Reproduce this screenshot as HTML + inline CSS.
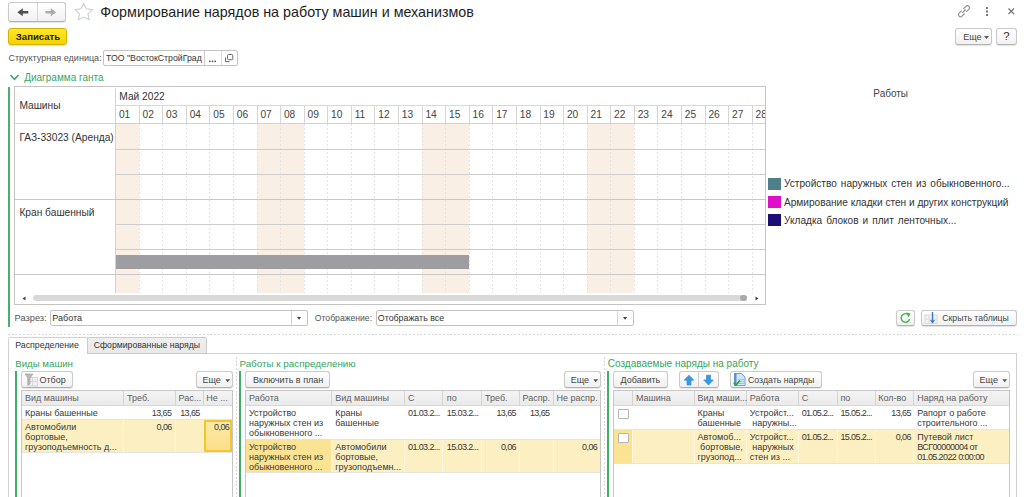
<!DOCTYPE html>
<html><head><meta charset="utf-8"><style>
html,body{margin:0;padding:0;background:#fff;}
body{width:1024px;height:497px;position:relative;overflow:hidden;font-family:"Liberation Sans",sans-serif;}
body>div,body>svg{position:absolute;}
.t{white-space:pre;line-height:1;}
</style></head><body>
<div style="left:8px;top:2px;width:58px;height:20px;box-sizing:border-box;border:1px solid #c9c9c9;border-bottom-color:#b3b3b3;border-radius:3px;background:linear-gradient(#fff,#f1f1f1);box-shadow:0 1px 1px rgba(0,0,0,.12);"></div>
<div style="left:37px;top:3px;width:1px;height:18px;background:#d6d6d6;"></div>
<svg style="position:absolute;left:0;top:0" width="100" height="30">
<path d="M17.3 12.2 L22.8 8.2 V16.2 Z M22 11 H28.3 V13.5 H22 Z" fill="#505050"/>
<path d="M56.2 12.2 L50.7 8.2 V16.2 Z M51.5 11 H45.4 V13.5 H51.5 Z" fill="#ababab"/>
<path d="M83.75 3.50 L86.40 8.86 L92.31 9.72 L88.03 13.89 L89.04 19.78 L83.75 17.00 L78.46 19.78 L79.47 13.89 L75.19 9.72 L81.10 8.86 Z" stroke="#c9d0d6" stroke-width="1.1" fill="none" stroke-linejoin="miter"/>
</svg>
<div class="t" style="left:100.30px;top:4.50px;font-size:14.3px;color:#1e1e1e;font-weight:normal;">Формирование нарядов на работу машин и механизмов</div>
<svg style="position:absolute;left:950px;top:0" width="74" height="24">
<g stroke="#8c8c8c" stroke-width="1.3" fill="none" transform="translate(14 11.2) rotate(-45) scale(0.86) translate(-14 -11)">
<path d="M12.6 8.6 H8.3 A2.4 2.4 0 0 0 8.3 13.4 H12.6"/>
<path d="M15.4 8.6 H19.7 A2.4 2.4 0 0 1 19.7 13.4 H15.4"/>
<path d="M11.2 11 H16.8"/>
</g>
<rect x="36" y="7" width="2" height="2" fill="#777"/><rect x="36" y="10.5" width="2" height="2" fill="#777"/><rect x="36" y="14" width="2" height="2" fill="#777"/>
<path d="M58.5 8.5 L64 14 M64 8.5 L58.5 14" stroke="#777" stroke-width="1.3"/>
</svg>
<div style="left:955px;top:28px;width:37px;height:17px;box-sizing:border-box;border:1px solid #c9c9c9;border-bottom-color:#b3b3b3;border-radius:3px;background:linear-gradient(#fff,#f1f1f1);box-shadow:0 1px 1px rgba(0,0,0,.12);"></div>
<div class="t" style="left:963.30px;top:32.88px;font-size:9px;color:#444;font-weight:normal;">Еще</div>
<svg style="position:absolute;left:984px;top:36px" width="6" height="4"><path d="M0 0H5L2.5 3Z" fill="#555"/></svg>
<div style="left:996px;top:28px;width:21px;height:17px;box-sizing:border-box;border:1px solid #c9c9c9;border-bottom-color:#b3b3b3;border-radius:3px;background:linear-gradient(#fff,#f1f1f1);box-shadow:0 1px 1px rgba(0,0,0,.12);"></div>
<div class="t" style="left:1003.20px;top:31.23px;font-size:11.3px;color:#2a2a2a;font-weight:normal;">?</div>
<div style="left:8px;top:28px;width:59px;height:16.5px;box-sizing:border-box;border:1px solid #d5b400;border-radius:3px;background:linear-gradient(#ffe52e,#f6d200);box-shadow:0 1px 1px rgba(0,0,0,.15);"></div>
<div class="t" style="left:15.80px;top:31.67px;font-size:9.6px;color:#1a1a1a;font-weight:bold;">Записать</div>
<div class="t" style="left:8.40px;top:54.34px;font-size:9.05px;color:#555;font-weight:normal;">Структурная единица:</div>
<div style="left:103px;top:50px;width:135px;height:16px;box-sizing:border-box;border:1px solid #c3c3c3;border-radius:2px;background:#fff;"></div>
<div style="left:204px;top:51px;width:1px;height:14px;background:#cfcfcf;"></div>
<div style="left:220.5px;top:51px;width:1px;height:14px;background:#dadada;"></div>
<div class="t" style="left:106px;top:53px;width:96px;overflow:hidden;font-size:8.75px;color:#333;line-height:10px">ТОО "ВостокСтройГрад"</div>
<svg style="position:absolute;left:205px;top:56px" width="15" height="8">
<rect x="4" y="4.6" width="1.6" height="1.5" fill="#555"/><rect x="6.7" y="4.6" width="1.6" height="1.5" fill="#555"/><rect x="9.4" y="4.6" width="1.6" height="1.5" fill="#555"/>
</svg>
<svg style="position:absolute;left:224px;top:53px" width="10" height="10">
<rect x="3.6" y="1.5" width="5.2" height="5.2" rx="1" fill="none" stroke="#666" stroke-width="1"/>
<path d="M1.5 4.5 V8.6 H5.5" fill="none" stroke="#666" stroke-width="1"/>
</svg>
<svg style="position:absolute;left:9px;top:73px" width="12" height="9"><path d="M1.5 2 L5.5 6.3 L9.5 2" stroke="#3aa56a" stroke-width="1.5" fill="none"/></svg>
<div class="t" style="left:24.20px;top:72.53px;font-size:10px;color:#35a764;font-weight:normal;">Диаграмма ганта</div>
<div style="left:8px;top:86.5px;width:1.5px;height:240.0px;background:#45b06f;"></div>
<div style="left:14px;top:86px;width:752px;height:219px;box-sizing:border-box;border:1px solid #c4c4c4;background:#fff;"></div>
<div style="left:115.6px;top:124.1px;width:23.58px;height:168.50000000000003px;background:#faefe4;"></div>
<div style="left:257.08px;top:124.1px;width:23.58px;height:168.50000000000003px;background:#faefe4;"></div>
<div style="left:280.65999999999997px;top:124.1px;width:23.58px;height:168.50000000000003px;background:#faefe4;"></div>
<div style="left:422.14px;top:124.1px;width:23.58px;height:168.50000000000003px;background:#faefe4;"></div>
<div style="left:445.72px;top:124.1px;width:23.58px;height:168.50000000000003px;background:#faefe4;"></div>
<div style="left:587.1999999999999px;top:124.1px;width:23.58px;height:168.50000000000003px;background:#faefe4;"></div>
<div style="left:610.78px;top:124.1px;width:23.58px;height:168.50000000000003px;background:#faefe4;"></div>
<div style="left:139px;top:124px;width:1px;height:168.6px;background:repeating-linear-gradient(#e3e3e3 0 2.5px,transparent 2.5px 4px)"></div>
<div style="left:162px;top:124px;width:1px;height:168.6px;background:repeating-linear-gradient(#e3e3e3 0 2.5px,transparent 2.5px 4px)"></div>
<div style="left:186px;top:124px;width:1px;height:168.6px;background:repeating-linear-gradient(#e3e3e3 0 2.5px,transparent 2.5px 4px)"></div>
<div style="left:209px;top:124px;width:1px;height:168.6px;background:repeating-linear-gradient(#e3e3e3 0 2.5px,transparent 2.5px 4px)"></div>
<div style="left:233px;top:124px;width:1px;height:168.6px;background:repeating-linear-gradient(#e3e3e3 0 2.5px,transparent 2.5px 4px)"></div>
<div style="left:257px;top:124px;width:1px;height:168.6px;background:repeating-linear-gradient(#e3e3e3 0 2.5px,transparent 2.5px 4px)"></div>
<div style="left:280px;top:124px;width:1px;height:168.6px;background:repeating-linear-gradient(#e3e3e3 0 2.5px,transparent 2.5px 4px)"></div>
<div style="left:304px;top:124px;width:1px;height:168.6px;background:repeating-linear-gradient(#e3e3e3 0 2.5px,transparent 2.5px 4px)"></div>
<div style="left:327px;top:124px;width:1px;height:168.6px;background:repeating-linear-gradient(#e3e3e3 0 2.5px,transparent 2.5px 4px)"></div>
<div style="left:351px;top:124px;width:1px;height:168.6px;background:repeating-linear-gradient(#e3e3e3 0 2.5px,transparent 2.5px 4px)"></div>
<div style="left:374px;top:124px;width:1px;height:168.6px;background:repeating-linear-gradient(#e3e3e3 0 2.5px,transparent 2.5px 4px)"></div>
<div style="left:398px;top:124px;width:1px;height:168.6px;background:repeating-linear-gradient(#e3e3e3 0 2.5px,transparent 2.5px 4px)"></div>
<div style="left:422px;top:124px;width:1px;height:168.6px;background:repeating-linear-gradient(#e3e3e3 0 2.5px,transparent 2.5px 4px)"></div>
<div style="left:445px;top:124px;width:1px;height:168.6px;background:repeating-linear-gradient(#e3e3e3 0 2.5px,transparent 2.5px 4px)"></div>
<div style="left:469px;top:124px;width:1px;height:168.6px;background:repeating-linear-gradient(#e3e3e3 0 2.5px,transparent 2.5px 4px)"></div>
<div style="left:492px;top:124px;width:1px;height:168.6px;background:repeating-linear-gradient(#e3e3e3 0 2.5px,transparent 2.5px 4px)"></div>
<div style="left:516px;top:124px;width:1px;height:168.6px;background:repeating-linear-gradient(#e3e3e3 0 2.5px,transparent 2.5px 4px)"></div>
<div style="left:540px;top:124px;width:1px;height:168.6px;background:repeating-linear-gradient(#e3e3e3 0 2.5px,transparent 2.5px 4px)"></div>
<div style="left:563px;top:124px;width:1px;height:168.6px;background:repeating-linear-gradient(#e3e3e3 0 2.5px,transparent 2.5px 4px)"></div>
<div style="left:587px;top:124px;width:1px;height:168.6px;background:repeating-linear-gradient(#e3e3e3 0 2.5px,transparent 2.5px 4px)"></div>
<div style="left:610px;top:124px;width:1px;height:168.6px;background:repeating-linear-gradient(#e3e3e3 0 2.5px,transparent 2.5px 4px)"></div>
<div style="left:634px;top:124px;width:1px;height:168.6px;background:repeating-linear-gradient(#e3e3e3 0 2.5px,transparent 2.5px 4px)"></div>
<div style="left:657px;top:124px;width:1px;height:168.6px;background:repeating-linear-gradient(#e3e3e3 0 2.5px,transparent 2.5px 4px)"></div>
<div style="left:681px;top:124px;width:1px;height:168.6px;background:repeating-linear-gradient(#e3e3e3 0 2.5px,transparent 2.5px 4px)"></div>
<div style="left:705px;top:124px;width:1px;height:168.6px;background:repeating-linear-gradient(#e3e3e3 0 2.5px,transparent 2.5px 4px)"></div>
<div style="left:728px;top:124px;width:1px;height:168.6px;background:repeating-linear-gradient(#e3e3e3 0 2.5px,transparent 2.5px 4px)"></div>
<div style="left:752px;top:124px;width:1px;height:168.6px;background:repeating-linear-gradient(#e3e3e3 0 2.5px,transparent 2.5px 4px)"></div>
<div style="left:139px;top:105px;width:1px;height:18px;background:#d6d6d6;"></div>
<div style="left:162px;top:105px;width:1px;height:18px;background:#d6d6d6;"></div>
<div style="left:186px;top:105px;width:1px;height:18px;background:#d6d6d6;"></div>
<div style="left:209px;top:105px;width:1px;height:18px;background:#d6d6d6;"></div>
<div style="left:233px;top:105px;width:1px;height:18px;background:#d6d6d6;"></div>
<div style="left:257px;top:105px;width:1px;height:18px;background:#d6d6d6;"></div>
<div style="left:280px;top:105px;width:1px;height:18px;background:#d6d6d6;"></div>
<div style="left:304px;top:105px;width:1px;height:18px;background:#d6d6d6;"></div>
<div style="left:327px;top:105px;width:1px;height:18px;background:#d6d6d6;"></div>
<div style="left:351px;top:105px;width:1px;height:18px;background:#d6d6d6;"></div>
<div style="left:374px;top:105px;width:1px;height:18px;background:#d6d6d6;"></div>
<div style="left:398px;top:105px;width:1px;height:18px;background:#d6d6d6;"></div>
<div style="left:422px;top:105px;width:1px;height:18px;background:#d6d6d6;"></div>
<div style="left:445px;top:105px;width:1px;height:18px;background:#d6d6d6;"></div>
<div style="left:469px;top:105px;width:1px;height:18px;background:#d6d6d6;"></div>
<div style="left:492px;top:105px;width:1px;height:18px;background:#d6d6d6;"></div>
<div style="left:516px;top:105px;width:1px;height:18px;background:#d6d6d6;"></div>
<div style="left:540px;top:105px;width:1px;height:18px;background:#d6d6d6;"></div>
<div style="left:563px;top:105px;width:1px;height:18px;background:#d6d6d6;"></div>
<div style="left:587px;top:105px;width:1px;height:18px;background:#d6d6d6;"></div>
<div style="left:610px;top:105px;width:1px;height:18px;background:#d6d6d6;"></div>
<div style="left:634px;top:105px;width:1px;height:18px;background:#d6d6d6;"></div>
<div style="left:657px;top:105px;width:1px;height:18px;background:#d6d6d6;"></div>
<div style="left:681px;top:105px;width:1px;height:18px;background:#d6d6d6;"></div>
<div style="left:705px;top:105px;width:1px;height:18px;background:#d6d6d6;"></div>
<div style="left:728px;top:105px;width:1px;height:18px;background:#d6d6d6;"></div>
<div style="left:752px;top:105px;width:1px;height:18px;background:#d6d6d6;"></div>
<div style="left:115px;top:87.5px;width:1px;height:205.10000000000002px;background:#d2d2d2;"></div>
<div style="left:116px;top:105px;width:649px;height:1px;background:#d8d8d8;"></div>
<div style="left:15px;top:123px;width:750px;height:1px;background:#d2d2d2;"></div>
<div style="left:115.6px;top:149px;width:649.4px;height:1px;background:#cdcdcd;"></div>
<div style="left:115.6px;top:174px;width:649.4px;height:1px;background:#cdcdcd;"></div>
<div style="left:115.6px;top:224px;width:649.4px;height:1px;background:#cdcdcd;"></div>
<div style="left:115.6px;top:249px;width:649.4px;height:1px;background:#cdcdcd;"></div>
<div style="left:15px;top:199px;width:750px;height:1px;background:#c8c8c8;"></div>
<div style="left:15px;top:274px;width:750px;height:1px;background:#c8c8c8;"></div>
<div style="left:115.9px;top:255.1px;width:353.5px;height:13.8px;background:#9e9da2;"></div>
<div class="t" style="left:19.40px;top:100.57px;font-size:10.2px;color:#333;font-weight:normal;">Машины</div>
<div class="t" style="left:119.30px;top:91.77px;font-size:10.2px;color:#333;font-weight:normal;">Май 2022</div>
<div class="t" style="left:118.90px;top:109.57px;font-size:10.2px;color:#444;font-weight:normal;">01</div>
<div class="t" style="left:142.48px;top:109.57px;font-size:10.2px;color:#444;font-weight:normal;">02</div>
<div class="t" style="left:166.06px;top:109.57px;font-size:10.2px;color:#444;font-weight:normal;">03</div>
<div class="t" style="left:189.64px;top:109.57px;font-size:10.2px;color:#444;font-weight:normal;">04</div>
<div class="t" style="left:213.22px;top:109.57px;font-size:10.2px;color:#444;font-weight:normal;">05</div>
<div class="t" style="left:236.80px;top:109.57px;font-size:10.2px;color:#444;font-weight:normal;">06</div>
<div class="t" style="left:260.38px;top:109.57px;font-size:10.2px;color:#444;font-weight:normal;">07</div>
<div class="t" style="left:283.96px;top:109.57px;font-size:10.2px;color:#444;font-weight:normal;">08</div>
<div class="t" style="left:307.54px;top:109.57px;font-size:10.2px;color:#444;font-weight:normal;">09</div>
<div class="t" style="left:331.12px;top:109.57px;font-size:10.2px;color:#444;font-weight:normal;">10</div>
<div class="t" style="left:354.70px;top:109.57px;font-size:10.2px;color:#444;font-weight:normal;">11</div>
<div class="t" style="left:378.28px;top:109.57px;font-size:10.2px;color:#444;font-weight:normal;">12</div>
<div class="t" style="left:401.86px;top:109.57px;font-size:10.2px;color:#444;font-weight:normal;">13</div>
<div class="t" style="left:425.44px;top:109.57px;font-size:10.2px;color:#444;font-weight:normal;">14</div>
<div class="t" style="left:449.02px;top:109.57px;font-size:10.2px;color:#444;font-weight:normal;">15</div>
<div class="t" style="left:472.60px;top:109.57px;font-size:10.2px;color:#444;font-weight:normal;">16</div>
<div class="t" style="left:496.18px;top:109.57px;font-size:10.2px;color:#444;font-weight:normal;">17</div>
<div class="t" style="left:519.76px;top:109.57px;font-size:10.2px;color:#444;font-weight:normal;">18</div>
<div class="t" style="left:543.34px;top:109.57px;font-size:10.2px;color:#444;font-weight:normal;">19</div>
<div class="t" style="left:566.92px;top:109.57px;font-size:10.2px;color:#444;font-weight:normal;">20</div>
<div class="t" style="left:590.50px;top:109.57px;font-size:10.2px;color:#444;font-weight:normal;">21</div>
<div class="t" style="left:614.08px;top:109.57px;font-size:10.2px;color:#444;font-weight:normal;">22</div>
<div class="t" style="left:637.66px;top:109.57px;font-size:10.2px;color:#444;font-weight:normal;">23</div>
<div class="t" style="left:661.24px;top:109.57px;font-size:10.2px;color:#444;font-weight:normal;">24</div>
<div class="t" style="left:684.82px;top:109.57px;font-size:10.2px;color:#444;font-weight:normal;">25</div>
<div class="t" style="left:708.40px;top:109.57px;font-size:10.2px;color:#444;font-weight:normal;">26</div>
<div class="t" style="left:731.98px;top:109.57px;font-size:10.2px;color:#444;font-weight:normal;">27</div>
<div class="t" style="left:755.56px;top:109.57px;font-size:10.2px;color:#444;font-weight:normal;">28</div>
<div style="left:765.5px;top:100px;width:6px;height:30px;background:#fff"></div>
<div style="left:765px;top:86px;width:1px;height:219px;background:#c4c4c4;"></div>
<div class="t" style="left:19.40px;top:132.57px;font-size:10.2px;color:#333;font-weight:normal;">ГАЗ-33023 (Аренда)</div>
<div class="t" style="left:19.40px;top:207.57px;font-size:10.2px;color:#333;font-weight:normal;">Кран башенный</div>
<div style="left:32.5px;top:295.2px;width:714.4px;height:6.3px;background:#d9d9d9;border-radius:3.2px;"></div>
<div style="left:740.2px;top:295.2px;width:6.7px;height:6.3px;background:#a9a9a9;border-radius:50%;"></div>
<svg style="position:absolute;left:22px;top:296px" width="5" height="6"><path d="M0.5 2.5L3.5 0.5V4.5Z" fill="#444"/></svg>
<svg style="position:absolute;left:755px;top:296px" width="5" height="6"><path d="M3.5 2.5L0.5 0.5V4.5Z" fill="#444"/></svg>
<div class="t" style="left:873.30px;top:88.94px;font-size:10px;color:#444;font-weight:normal;">Работы</div>
<div style="left:767.5px;top:177.5px;width:13px;height:12.3px;background:#4f7f8a;"></div>
<div style="left:767.5px;top:196px;width:13px;height:12px;background:#dd10c8;"></div>
<div style="left:767.5px;top:214px;width:13px;height:12px;background:#1b0f76;"></div>
<div class="t" style="left:784.00px;top:179.45px;font-size:10.1px;color:#333;font-weight:normal;word-spacing:1.2px">Устройство наружных стен из обыкновенного...</div>
<div class="t" style="left:784.00px;top:197.75px;font-size:10.1px;color:#333;font-weight:normal;">Армирование кладки стен и других конструкций</div>
<div class="t" style="left:784.00px;top:215.85px;font-size:10.1px;color:#333;font-weight:normal;word-spacing:1.2px">Укладка блоков и плит ленточных...</div>
<div class="t" style="left:14.50px;top:313.73px;font-size:9.3px;color:#555;font-weight:normal;">Разрез:</div>
<div style="left:50px;top:310px;width:258px;height:16px;box-sizing:border-box;border:1px solid #c3c3c3;border-radius:2px;background:#fff;"></div>
<div style="left:291px;top:311px;width:1px;height:14px;background:#d0d0d0;"></div>
<div class="t" style="left:52.30px;top:313.74px;font-size:9.05px;color:#333;font-weight:normal;">Работа</div>
<svg style="position:absolute;left:297px;top:317px" width="6" height="4"><path d="M0 0H4.2L2.1 2.8Z" fill="#444"/></svg>
<div class="t" style="left:314.80px;top:314.08px;font-size:8.65px;color:#555;font-weight:normal;">Отображение:</div>
<div style="left:376px;top:310px;width:258px;height:16px;box-sizing:border-box;border:1px solid #c3c3c3;border-radius:2px;background:#fff;"></div>
<div style="left:617px;top:311px;width:1px;height:14px;background:#d8d8d8;"></div>
<div class="t" style="left:377.80px;top:314.11px;font-size:8.85px;color:#333;font-weight:normal;">Отображать все</div>
<svg style="position:absolute;left:622.8px;top:317px" width="6" height="4"><path d="M0 0H4.2L2.1 2.8Z" fill="#444"/></svg>
<div style="left:896px;top:310px;width:19px;height:16px;box-sizing:border-box;border:1px solid #c9c9c9;border-bottom-color:#b3b3b3;border-radius:3px;background:linear-gradient(#fff,#f1f1f1);box-shadow:0 1px 1px rgba(0,0,0,.12);"></div>
<svg style="position:absolute;left:899px;top:311px" width="14" height="14">
<path d="M10.6 8.2 A4.3 4.3 0 1 1 8.6 3.2" stroke="#46b24c" stroke-width="1.4" fill="none"/>
<path d="M7.2 1.6 L11.4 2.4 L9.6 6.4 Z" fill="#46b24c"/>
</svg>
<div style="left:921px;top:310px;width:96px;height:16px;box-sizing:border-box;border:1px solid #c9c9c9;border-bottom-color:#b3b3b3;border-radius:3px;background:linear-gradient(#fff,#f1f1f1);box-shadow:0 1px 1px rgba(0,0,0,.12);"></div>
<svg style="position:absolute;left:924px;top:311px" width="15" height="14">
<rect x="1" y="4" width="12" height="8.5" fill="#f2f2f2" stroke="#dcdcdc" stroke-width="1"/>
<path d="M1 8.2H13M5 4V12.5M9 4V12.5" stroke="#dcdcdc" stroke-width="1"/>
<path d="M8.5 1V10" stroke="#3f79c0" stroke-width="1.4"/><path d="M5.8 9.2L8.5 12.4L11.2 9.2Z" fill="#3f79c0"/>
</svg>
<div class="t" style="left:942.30px;top:314.24px;font-size:8.7px;color:#444;font-weight:normal;">Скрыть таблицы</div>
<div style="left:8px;top:334px;width:1010px;height:1px;background:repeating-linear-gradient(90deg,#d9d9d9 0 2px,transparent 2px 3.75px)"></div>
<div style="left:8px;top:353px;width:1009px;height:150px;box-sizing:border-box;border:1px solid #d2d2d2;background:#fff"></div>
<div style="left:8px;top:337px;width:80px;height:17px;box-sizing:border-box;border:1px solid #d2d2d2;border-bottom:none;background:#fff;border-radius:2px 2px 0 0"></div>
<div style="left:87px;top:337px;width:120px;height:17px;box-sizing:border-box;border:1px solid #cbcbcb;background:linear-gradient(#f0f0f0,#e8e8e8);border-radius:2px 2px 0 0"></div>
<div class="t" style="left:15.20px;top:341.05px;font-size:8.8px;color:#333;font-weight:normal;">Распределение</div>
<div class="t" style="left:93.70px;top:341.14px;font-size:8.7px;color:#333;font-weight:normal;">Сформированные наряды</div>
<div class="t" style="left:15.20px;top:359.39px;font-size:9.7px;color:#33a561;font-weight:normal;">Виды машин</div>
<div class="t" style="left:239.40px;top:359.26px;font-size:9.85px;color:#33a561;font-weight:normal;">Работы к распределению</div>
<div class="t" style="left:607.80px;top:359.14px;font-size:10px;color:#33a561;font-weight:normal;">Создаваемые наряды на работу</div>
<div style="left:15px;top:371px;width:1.5px;height:126px;background:#3fae69;"></div>
<div style="left:239px;top:371px;width:1.5px;height:126px;background:#3fae69;"></div>
<div style="left:607px;top:371px;width:1.5px;height:126px;background:#3fae69;"></div>
<div style="left:235.5px;top:357px;width:1px;height:140px;background:repeating-linear-gradient(#d8d8d8 0 2px,transparent 2px 3.75px)"></div>
<div style="left:604px;top:357px;width:1px;height:140px;background:repeating-linear-gradient(#d8d8d8 0 2px,transparent 2px 3.75px)"></div>
<div style="left:21px;top:390px;width:212px;height:110px;box-sizing:border-box;border:1px solid #c6c6c6;background:#fff"></div>
<div style="left:22px;top:391px;width:210px;height:14px;background:linear-gradient(#f4f4f4,#eaeaea);"></div>
<div style="left:22px;top:405px;width:210px;height:1px;background:#d8d8d8;"></div>
<div style="left:123px;top:391px;width:1px;height:14px;background:#d4d4d4;"></div>
<div style="left:175px;top:391px;width:1px;height:14px;background:#d4d4d4;"></div>
<div style="left:203px;top:391px;width:1px;height:14px;background:#d4d4d4;"></div>
<div style="left:22px;top:420px;width:210px;height:32px;background:#fcf0c3;"></div>
<div style="left:123px;top:420px;width:1px;height:32px;background:#fdf7e2;"></div>
<div style="left:175px;top:420px;width:1px;height:32px;background:#fdf7e2;"></div>
<div style="left:203px;top:420px;width:1px;height:32px;background:#fdf7e2;"></div>
<div style="left:22px;top:419px;width:210px;height:1px;background:#e4e4e4;"></div>
<div style="left:22px;top:452px;width:210px;height:1px;background:#e4e4e4;"></div>
<div style="left:204px;top:420px;width:28px;height:32px;box-sizing:border-box;border:2px solid #f3c62b;background:linear-gradient(#fce9a8,#fbdf88);"></div>
<div class="t" style="left:25.00px;top:393.98px;font-size:9px;color:#5e5e5e;font-weight:normal;">Вид машины</div>
<div class="t" style="left:127.00px;top:393.98px;font-size:9px;color:#5e5e5e;font-weight:normal;">Треб.</div>
<div class="t" style="left:178.50px;top:393.98px;font-size:9px;color:#5e5e5e;font-weight:normal;">Рас...</div>
<div class="t" style="left:206.20px;top:393.98px;font-size:9px;color:#5e5e5e;font-weight:normal;">Не ...</div>
<div class="t" style="left:25.00px;top:408.78px;font-size:9px;color:#383838;font-weight:normal;">Краны башенные</div>
<div class="t" style="right:852.70px;top:408.78px;font-size:9px;color:#383838;letter-spacing:-0.6px;">13,65</div>
<div class="t" style="right:824.30px;top:408.78px;font-size:9px;color:#383838;letter-spacing:-0.6px;">13,65</div>
<div class="t" style="left:25.00px;top:423.08px;font-size:9px;color:#383838;font-weight:normal;">Автомобили</div>
<div class="t" style="left:25.00px;top:433.08px;font-size:9px;color:#383838;font-weight:normal;">бортовые,</div>
<div class="t" style="left:25.00px;top:443.08px;font-size:9px;color:#383838;font-weight:normal;">грузоподъемность д...</div>
<div class="t" style="right:852.30px;top:423.08px;font-size:9px;color:#383838;letter-spacing:-0.6px;">0,06</div>
<div class="t" style="right:794.80px;top:423.08px;font-size:9px;color:#383838;letter-spacing:-0.6px;">0,06</div>
<div style="left:21px;top:371px;width:52px;height:17px;box-sizing:border-box;border:1px solid #cacaca;border-bottom-color:#b0b0b0;border-radius:3px;background:linear-gradient(#fff,#f0f0f0);box-shadow:0 1px 1px rgba(0,0,0,.10)"></div>
<svg style="position:absolute;left:24px;top:373px" width="14" height="14">
<rect x="3.5" y="4.5" width="10" height="8.5" fill="#f0f0f0" stroke="#d8d8d8"/>
<path d="M3.5 8.5H13.5M8.5 4.5V13" stroke="#d8d8d8"/>
<path d="M1 1H9L6 5V11L4 12V5Z" fill="#b9b9b9" stroke="#9a9a9a" stroke-width="0.6"/>
</svg>
<div class="t" style="left:39.50px;top:375.68px;font-size:9px;color:#444;font-weight:normal;">Отбор</div>
<div style="left:196px;top:371px;width:37px;height:17px;box-sizing:border-box;border:1px solid #cacaca;border-bottom-color:#b0b0b0;border-radius:3px;background:linear-gradient(#fff,#f0f0f0);box-shadow:0 1px 1px rgba(0,0,0,.10)"></div>
<div class="t" style="left:202.50px;top:375.68px;font-size:9px;color:#444;font-weight:normal;">Еще</div>
<svg style="position:absolute;left:225px;top:379px" width="6" height="4"><path d="M0.3 0.2H5.2L2.75 3.2Z" fill="#555"/></svg>
<div style="left:245px;top:390px;width:356px;height:110px;box-sizing:border-box;border:1px solid #c6c6c6;background:#fff"></div>
<div style="left:246px;top:391px;width:354px;height:14px;background:linear-gradient(#f4f4f4,#eaeaea);"></div>
<div style="left:246px;top:405px;width:354px;height:1px;background:#d8d8d8;"></div>
<div style="left:331px;top:391px;width:1px;height:14px;background:#d4d4d4;"></div>
<div style="left:404px;top:391px;width:1px;height:14px;background:#d4d4d4;"></div>
<div style="left:442px;top:391px;width:1px;height:14px;background:#d4d4d4;"></div>
<div style="left:481px;top:391px;width:1px;height:14px;background:#d4d4d4;"></div>
<div style="left:519px;top:391px;width:1px;height:14px;background:#d4d4d4;"></div>
<div style="left:553px;top:391px;width:1px;height:14px;background:#d4d4d4;"></div>
<div style="left:246px;top:439px;width:354px;height:33px;background:#fcf0c3;"></div>
<div style="left:331px;top:439px;width:1px;height:33px;background:#fdf7e2;"></div>
<div style="left:404px;top:439px;width:1px;height:33px;background:#fdf7e2;"></div>
<div style="left:442px;top:439px;width:1px;height:33px;background:#fdf7e2;"></div>
<div style="left:481px;top:439px;width:1px;height:33px;background:#fdf7e2;"></div>
<div style="left:519px;top:439px;width:1px;height:33px;background:#fdf7e2;"></div>
<div style="left:553px;top:439px;width:1px;height:33px;background:#fdf7e2;"></div>
<div style="left:246px;top:439px;width:354px;height:1px;background:#e4e4e4;"></div>
<div style="left:246px;top:472px;width:354px;height:1px;background:#e4e4e4;"></div>
<div style="left:246px;top:439px;width:85px;height:33px;background:#fbe394;"></div>
<div class="t" style="left:249.00px;top:394.08px;font-size:9px;color:#5e5e5e;font-weight:normal;">Работа</div>
<div class="t" style="left:335.30px;top:394.08px;font-size:9px;color:#5e5e5e;font-weight:normal;">Вид машины</div>
<div class="t" style="left:408.00px;top:394.08px;font-size:9px;color:#5e5e5e;font-weight:normal;">С</div>
<div class="t" style="left:446.80px;top:394.08px;font-size:9px;color:#5e5e5e;font-weight:normal;">по</div>
<div class="t" style="left:485.00px;top:394.08px;font-size:9px;color:#5e5e5e;font-weight:normal;">Треб.</div>
<div class="t" style="left:522.50px;top:394.08px;font-size:9px;color:#5e5e5e;font-weight:normal;">Распр.</div>
<div class="t" style="left:556.50px;top:394.08px;font-size:9px;color:#5e5e5e;font-weight:normal;">Не распр.</div>
<div class="t" style="left:249.00px;top:409.38px;font-size:9px;color:#383838;font-weight:normal;">Устройство</div>
<div class="t" style="left:249.00px;top:419.28px;font-size:9px;color:#383838;font-weight:normal;">наружных стен из</div>
<div class="t" style="left:249.00px;top:429.18px;font-size:9px;color:#383838;font-weight:normal;">обыкновенного ...</div>
<div class="t" style="left:335.30px;top:409.38px;font-size:9px;color:#383838;font-weight:normal;">Краны</div>
<div class="t" style="left:335.30px;top:419.28px;font-size:9px;color:#383838;font-weight:normal;">башенные</div>
<div class="t" style="left:408.00px;top:409.38px;font-size:9px;color:#383838;font-weight:normal;letter-spacing:-0.6px;">01.03.2...</div>
<div class="t" style="left:446.80px;top:409.38px;font-size:9px;color:#383838;font-weight:normal;letter-spacing:-0.6px;">15.03.2...</div>
<div class="t" style="right:508.00px;top:409.38px;font-size:9px;color:#383838;letter-spacing:-0.6px;">13,65</div>
<div class="t" style="right:474.50px;top:409.38px;font-size:9px;color:#383838;letter-spacing:-0.6px;">13,65</div>
<div class="t" style="left:249.00px;top:443.38px;font-size:9px;color:#383838;font-weight:normal;">Устройство</div>
<div class="t" style="left:249.00px;top:453.28px;font-size:9px;color:#383838;font-weight:normal;">наружных стен из</div>
<div class="t" style="left:249.00px;top:463.18px;font-size:9px;color:#383838;font-weight:normal;">обыкновенного ...</div>
<div class="t" style="left:335.30px;top:443.38px;font-size:9px;color:#383838;font-weight:normal;">Автомобили</div>
<div class="t" style="left:335.30px;top:453.28px;font-size:9px;color:#383838;font-weight:normal;">бортовые,</div>
<div class="t" style="left:335.30px;top:463.18px;font-size:9px;color:#383838;font-weight:normal;">грузоподъемн...</div>
<div class="t" style="left:408.00px;top:443.38px;font-size:9px;color:#383838;font-weight:normal;letter-spacing:-0.6px;">01.03.2...</div>
<div class="t" style="left:446.80px;top:443.38px;font-size:9px;color:#383838;font-weight:normal;letter-spacing:-0.6px;">15.03.2...</div>
<div class="t" style="right:508.00px;top:443.38px;font-size:9px;color:#383838;letter-spacing:-0.6px;">0,06</div>
<div class="t" style="right:426.80px;top:443.38px;font-size:9px;color:#383838;letter-spacing:-0.6px;">0,06</div>
<div style="left:245px;top:371px;width:85px;height:17px;box-sizing:border-box;border:1px solid #cacaca;border-bottom-color:#b0b0b0;border-radius:3px;background:linear-gradient(#fff,#f0f0f0);box-shadow:0 1px 1px rgba(0,0,0,.10)"></div>
<div class="t" style="left:253.00px;top:375.68px;font-size:9px;color:#444;font-weight:normal;">Включить в план</div>
<div style="left:564px;top:371px;width:37px;height:17px;box-sizing:border-box;border:1px solid #cacaca;border-bottom-color:#b0b0b0;border-radius:3px;background:linear-gradient(#fff,#f0f0f0);box-shadow:0 1px 1px rgba(0,0,0,.10)"></div>
<div class="t" style="left:570.80px;top:375.68px;font-size:9px;color:#444;font-weight:normal;">Еще</div>
<svg style="position:absolute;left:593px;top:379px" width="6" height="4"><path d="M0.3 0.2H5.2L2.75 3.2Z" fill="#555"/></svg>
<div style="left:613px;top:390px;width:397px;height:110px;box-sizing:border-box;border:1px solid #c6c6c6;background:#fff"></div>
<div style="left:614px;top:391px;width:395px;height:14px;background:linear-gradient(#f4f4f4,#eaeaea);"></div>
<div style="left:614px;top:405px;width:395px;height:1px;background:#d8d8d8;"></div>
<div style="left:632px;top:391px;width:1px;height:14px;background:#d4d4d4;"></div>
<div style="left:694px;top:391px;width:1px;height:14px;background:#d4d4d4;"></div>
<div style="left:746px;top:391px;width:1px;height:14px;background:#d4d4d4;"></div>
<div style="left:798px;top:391px;width:1px;height:14px;background:#d4d4d4;"></div>
<div style="left:837px;top:391px;width:1px;height:14px;background:#d4d4d4;"></div>
<div style="left:875px;top:391px;width:1px;height:14px;background:#d4d4d4;"></div>
<div style="left:913px;top:391px;width:1px;height:14px;background:#d4d4d4;"></div>
<div style="left:614px;top:430px;width:395px;height:33px;background:#fcf0c3;"></div>
<div style="left:632px;top:430px;width:1px;height:33px;background:#fdf7e2;"></div>
<div style="left:694px;top:430px;width:1px;height:33px;background:#fdf7e2;"></div>
<div style="left:746px;top:430px;width:1px;height:33px;background:#fdf7e2;"></div>
<div style="left:798px;top:430px;width:1px;height:33px;background:#fdf7e2;"></div>
<div style="left:837px;top:430px;width:1px;height:33px;background:#fdf7e2;"></div>
<div style="left:875px;top:430px;width:1px;height:33px;background:#fdf7e2;"></div>
<div style="left:913px;top:430px;width:1px;height:33px;background:#fdf7e2;"></div>
<div style="left:614px;top:429px;width:395px;height:1px;background:#e4e4e4;"></div>
<div style="left:614px;top:463px;width:395px;height:1px;background:#e4e4e4;"></div>
<div style="left:614px;top:430px;width:18px;height:33px;background:#fbe394;"></div>
<div class="t" style="left:636.00px;top:394.08px;font-size:9px;color:#5e5e5e;font-weight:normal;">Машина</div>
<div class="t" style="left:697.50px;top:394.08px;font-size:9px;color:#5e5e5e;font-weight:normal;">Вид маши...</div>
<div class="t" style="left:749.80px;top:394.08px;font-size:9px;color:#5e5e5e;font-weight:normal;">Работа</div>
<div class="t" style="left:801.70px;top:394.08px;font-size:9px;color:#5e5e5e;font-weight:normal;">С</div>
<div class="t" style="left:840.40px;top:394.08px;font-size:9px;color:#5e5e5e;font-weight:normal;">по</div>
<div class="t" style="left:878.30px;top:394.08px;font-size:9px;color:#5e5e5e;font-weight:normal;">Кол-во</div>
<div class="t" style="left:917.20px;top:394.08px;font-size:9px;color:#5e5e5e;font-weight:normal;">Наряд на работу</div>
<div style="left:618px;top:409px;width:11px;height:10px;box-sizing:border-box;border:1px solid #b5b5b5;border-radius:1px;background:#fff"></div>
<div style="left:618px;top:433px;width:11px;height:10px;box-sizing:border-box;border:1px solid #b5b5b5;border-radius:1px;background:#fff"></div>
<div class="t" style="left:697.50px;top:408.78px;font-size:9px;color:#383838;font-weight:normal;">Краны</div>
<div class="t" style="left:697.50px;top:418.78px;font-size:9px;color:#383838;font-weight:normal;">башенные</div>
<div class="t" style="left:749.80px;top:408.78px;font-size:9px;color:#383838;font-weight:normal;">Устройст...</div>
<div class="t" style="left:749.80px;top:418.78px;font-size:9px;color:#383838;font-weight:normal;">&nbsp;наружны...</div>
<div class="t" style="left:801.70px;top:408.78px;font-size:9px;color:#383838;font-weight:normal;letter-spacing:-0.6px;">01.05.2...</div>
<div class="t" style="left:840.40px;top:408.78px;font-size:9px;color:#383838;font-weight:normal;letter-spacing:-0.6px;">15.05.2...</div>
<div class="t" style="right:113.20px;top:408.78px;font-size:9px;color:#383838;letter-spacing:-0.6px;">13,65</div>
<div class="t" style="left:917.20px;top:408.78px;font-size:9px;color:#383838;font-weight:normal;">Рапорт о работе</div>
<div class="t" style="left:917.20px;top:418.78px;font-size:9px;color:#383838;font-weight:normal;">строительного ...</div>
<div class="t" style="left:697.50px;top:432.58px;font-size:9px;color:#383838;font-weight:normal;">Автомоб...</div>
<div class="t" style="left:697.50px;top:442.58px;font-size:9px;color:#383838;font-weight:normal;">&nbsp;бортовые,</div>
<div class="t" style="left:697.50px;top:452.58px;font-size:9px;color:#383838;font-weight:normal;">грузопод...</div>
<div class="t" style="left:749.80px;top:432.58px;font-size:9px;color:#383838;font-weight:normal;">Устройст...</div>
<div class="t" style="left:749.80px;top:442.58px;font-size:9px;color:#383838;font-weight:normal;">&nbsp;наружных</div>
<div class="t" style="left:749.80px;top:452.58px;font-size:9px;color:#383838;font-weight:normal;">стен из ...</div>
<div class="t" style="left:801.70px;top:432.58px;font-size:9px;color:#383838;font-weight:normal;letter-spacing:-0.6px;">01.05.2...</div>
<div class="t" style="left:840.40px;top:432.58px;font-size:9px;color:#383838;font-weight:normal;letter-spacing:-0.6px;">15.05.2...</div>
<div class="t" style="right:113.20px;top:432.58px;font-size:9px;color:#383838;letter-spacing:-0.6px;">0,06</div>
<div class="t" style="left:917.20px;top:432.58px;font-size:9px;color:#383838;font-weight:normal;">Путевой лист</div>
<div class="t" style="left:917.20px;top:442.58px;font-size:9px;color:#383838;font-weight:normal;letter-spacing:-0.6px;">ВСГ00000004 от</div>
<div class="t" style="left:917.20px;top:452.58px;font-size:9px;color:#383838;font-weight:normal;letter-spacing:-0.6px;">01.05.2022 0:00:00</div>
<div style="left:613px;top:371px;width:55px;height:17px;box-sizing:border-box;border:1px solid #cacaca;border-bottom-color:#b0b0b0;border-radius:3px;background:linear-gradient(#fff,#f0f0f0);box-shadow:0 1px 1px rgba(0,0,0,.10)"></div>
<div class="t" style="left:620.50px;top:375.68px;font-size:9px;color:#444;font-weight:normal;">Добавить</div>
<div style="left:679px;top:371px;width:40px;height:17px;box-sizing:border-box;border:1px solid #cacaca;border-bottom-color:#b0b0b0;border-radius:3px;background:linear-gradient(#fff,#f0f0f0);box-shadow:0 1px 1px rgba(0,0,0,.10)"></div>
<div style="left:698px;top:372px;width:1px;height:15px;background:#d0d0d0;"></div>
<svg style="position:absolute;left:680px;top:373px" width="38" height="14">
<path d="M9 2.2 L13.8 7.2 H11 V12 H7 V7.2 H4.2 Z" fill="#3a97dd" stroke="#3a97dd" stroke-width="0.8" stroke-linejoin="round"/>
<path d="M28.5 12 L23.7 7 H26.5 V2.2 H30.5 V7 H33.3 Z" fill="#3a97dd" stroke="#3a97dd" stroke-width="0.8" stroke-linejoin="round"/>
</svg>
<div style="left:730px;top:371px;width:92px;height:17px;box-sizing:border-box;border:1px solid #cacaca;border-bottom-color:#b0b0b0;border-radius:3px;background:linear-gradient(#fff,#f0f0f0);box-shadow:0 1px 1px rgba(0,0,0,.10)"></div>
<svg style="position:absolute;left:733px;top:373px" width="14" height="14">
<path d="M1.5 0.5H8.5L12 4V12.5H1.5Z" fill="#cfe6f8" stroke="#6fa3d6"/>
<rect x="1" y="0" width="2.5" height="13" fill="#5b93cf"/>
<path d="M5 6.5H11M5 8.5H11M5 10.5H11" stroke="#9cc6ec" stroke-width="1"/>
<path d="M0.8 9.5L3 12L7 7.5" stroke="#3a9a3a" stroke-width="1.8" fill="none"/>
</svg>
<div class="t" style="left:748.00px;top:375.89px;font-size:8.75px;color:#444;font-weight:normal;">Создать наряды</div>
<div style="left:973px;top:371px;width:37px;height:17px;box-sizing:border-box;border:1px solid #cacaca;border-bottom-color:#b0b0b0;border-radius:3px;background:linear-gradient(#fff,#f0f0f0);box-shadow:0 1px 1px rgba(0,0,0,.10)"></div>
<div class="t" style="left:979.60px;top:375.68px;font-size:9px;color:#444;font-weight:normal;">Еще</div>
<svg style="position:absolute;left:1002px;top:379px" width="6" height="4"><path d="M0.3 0.2H5.2L2.75 3.2Z" fill="#555"/></svg>
</body></html>
